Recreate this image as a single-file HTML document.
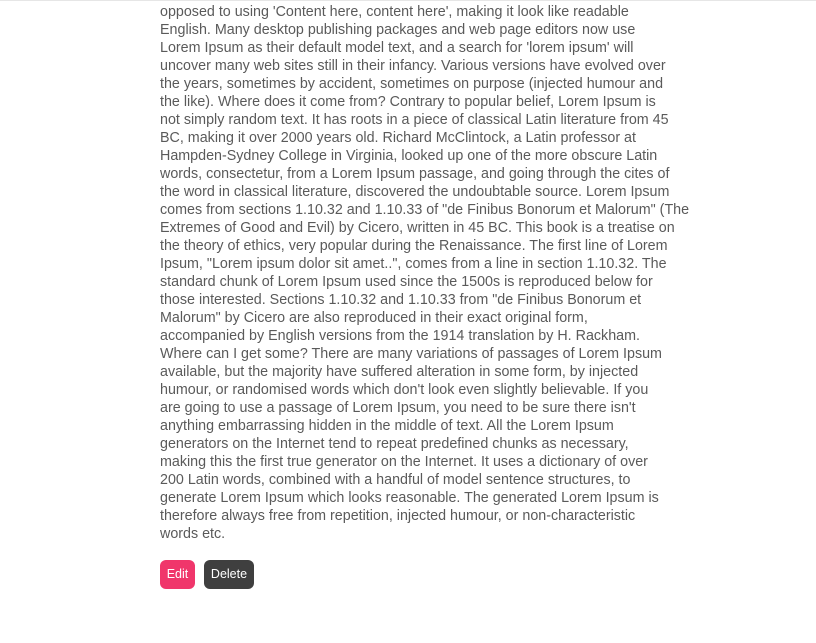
<!DOCTYPE html>
<html><head><meta charset="utf-8"><style>
html,body{margin:0;padding:0;background:#fff;width:816px;height:643px;overflow:hidden}
.top{position:absolute;left:0;top:0;width:816px;height:1px;background:#e6e6e6}
.t{position:absolute;left:160px;top:3px;font-family:"Liberation Sans",sans-serif;font-size:14.3px;line-height:18px;color:#5a5a5a;white-space:nowrap}
.b{position:absolute;top:560px;height:29px;border-radius:6px;color:#fff;font-family:"Liberation Sans",sans-serif;font-size:12.5px;line-height:29px;text-align:center}
</style></head><body>
<div class="top"></div>
<div class="t">opposed to using 'Content here, content here', making it look like readable<br>
English. Many desktop publishing packages and web page editors now use<br>
Lorem Ipsum as their default model text, and a search for 'lorem ipsum' will<br>
uncover many web sites still in their infancy. Various versions have evolved over<br>
the years, sometimes by accident, sometimes on purpose (injected humour and<br>
the like). Where does it come from? Contrary to popular belief, Lorem Ipsum is<br>
not simply random text. It has roots in a piece of classical Latin literature from 45<br>
BC, making it over 2000 years old. Richard McClintock, a Latin professor at<br>
Hampden-Sydney College in Virginia, looked up one of the more obscure Latin<br>
words, consectetur, from a Lorem Ipsum passage, and going through the cites of<br>
the word in classical literature, discovered the undoubtable source. Lorem Ipsum<br>
comes from sections 1.10.32 and 1.10.33 of "de Finibus Bonorum et Malorum" (The<br>
Extremes of Good and Evil) by Cicero, written in 45 BC. This book is a treatise on<br>
the theory of ethics, very popular during the Renaissance. The first line of Lorem<br>
Ipsum, "Lorem ipsum dolor sit amet..", comes from a line in section 1.10.32. The<br>
standard chunk of Lorem Ipsum used since the 1500s is reproduced below for<br>
those interested. Sections 1.10.32 and 1.10.33 from "de Finibus Bonorum et<br>
Malorum" by Cicero are also reproduced in their exact original form,<br>
accompanied by English versions from the 1914 translation by H. Rackham.<br>
Where can I get some? There are many variations of passages of Lorem Ipsum<br>
available, but the majority have suffered alteration in some form, by injected<br>
humour, or randomised words which don't look even slightly believable. If you<br>
are going to use a passage of Lorem Ipsum, you need to be sure there isn't<br>
anything embarrassing hidden in the middle of text. All the Lorem Ipsum<br>
generators on the Internet tend to repeat predefined chunks as necessary,<br>
making this the first true generator on the Internet. It uses a dictionary of over<br>
200 Latin words, combined with a handful of model sentence structures, to<br>
generate Lorem Ipsum which looks reasonable. The generated Lorem Ipsum is<br>
therefore always free from repetition, injected humour, or non-characteristic<br>
words etc.</div>
<div class="b" style="left:160px;width:35px;background:#f0366b">Edit</div>
<div class="b" style="left:204px;width:50px;background:#3f3f3f">Delete</div>
</body></html>
